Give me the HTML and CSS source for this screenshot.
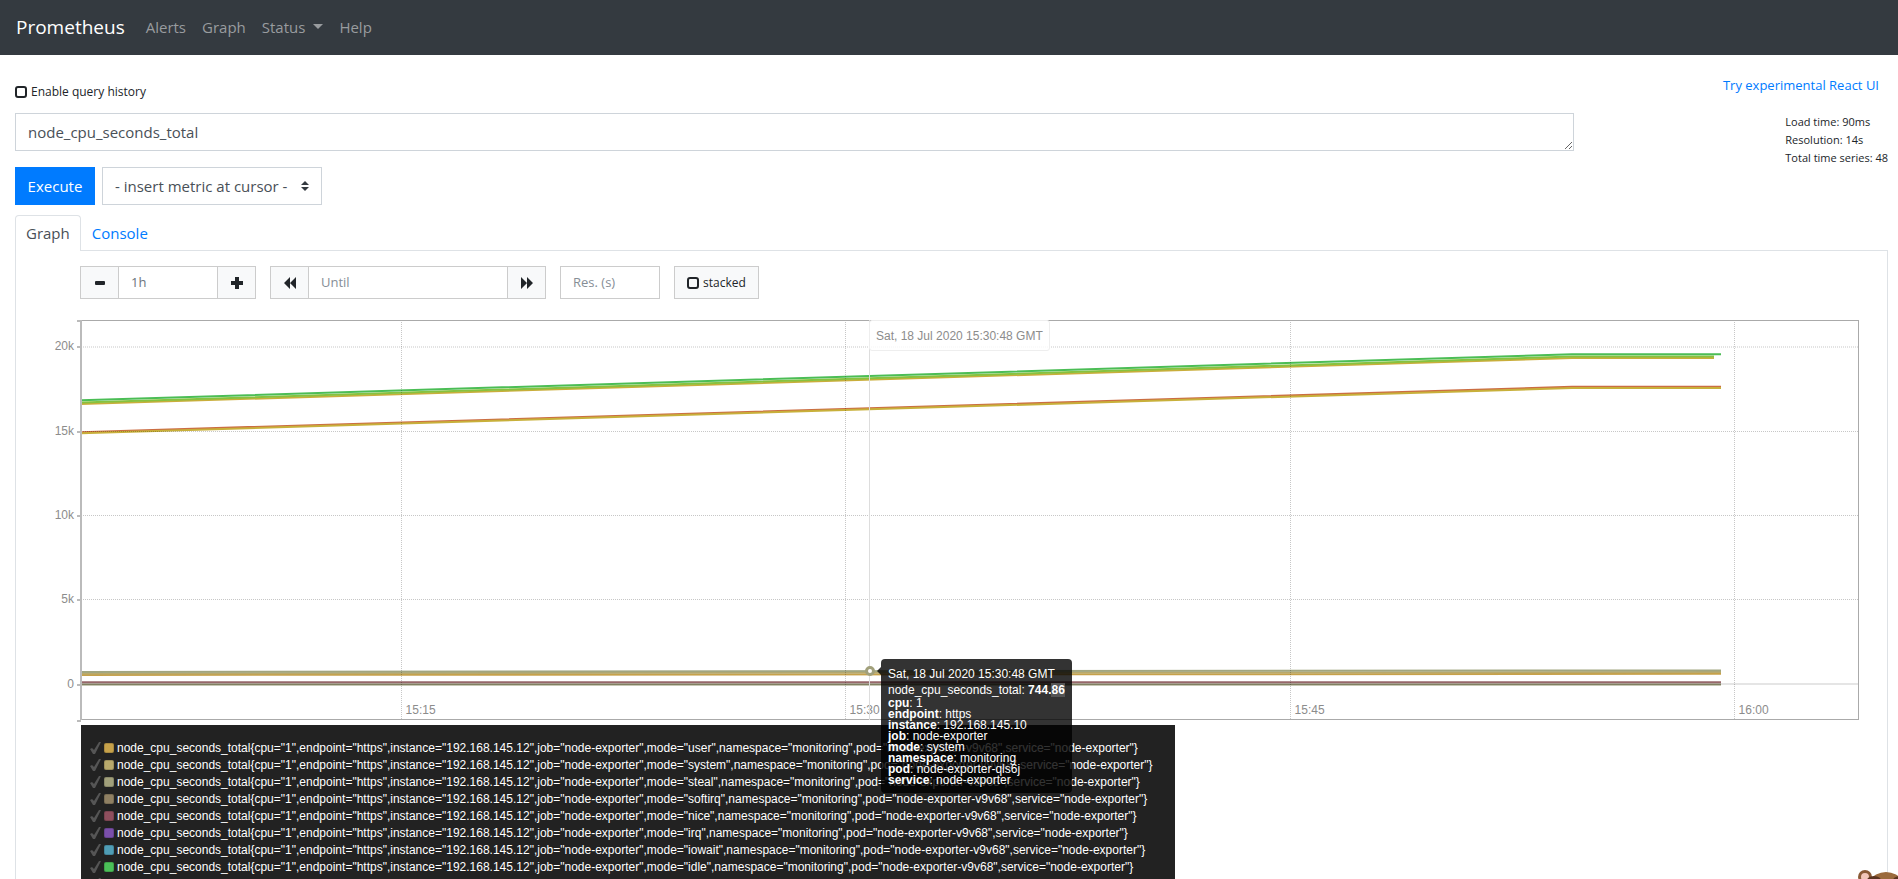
FILE: index.html
```
<!DOCTYPE html>
<html lang="en">
<head>
    <meta charset="UTF-8">
    <meta name="viewport" content="width=device-width, initial-scale=1.0">
    <title>Prometheus Time Series Collection and Processing Server</title>
    <link rel="stylesheet" href="styles.css">
</head>
<body>
    <nav class="navbar">
        <a class="brand" href="#">Prometheus</a>
        <a class="nav-link" href="#">Alerts</a>
        <a class="nav-link" href="#">Graph</a>
        <a class="nav-link dropdown" href="#">Status</a>
        <a class="nav-link" href="#">Help</a>
    </nav>

    <main class="container">
        <div class="top-row">
            <label class="check"><input type="checkbox" id="history"> Enable query history</label>
            <a class="new-ui" href="#">Try experimental React UI</a>
        </div>

        <div class="query-row">
            <textarea class="expression" rows="1" aria-label="Expression" spellcheck="false">node_cpu_seconds_total</textarea>
            <div class="stats">
                Load time: 90ms<br>
                Resolution: 14s<br>
                Total time series: 48
            </div>
        </div>

        <div class="execute-row">
            <button type="button" class="execute-btn">Execute</button>
            <div class="select-wrap">
                <select class="metric-select" aria-label="Insert metric">
                    <option>- insert metric at cursor -</option>
                </select>
                <svg class="select-icon" viewBox="0 0 8 10"><path d="M4 0 8 4H0zM0 6h8L4 10z"/></svg>
            </div>
        </div>

        <div class="tabs">
            <a class="tab active" href="#graph">Graph</a>
            <a class="tab" href="#console">Console</a>
        </div>

        <section class="tab-pane" id="graph">
            <form class="controls">
                <div class="group">
                    <button type="button" aria-label="Shrink range"><svg viewBox="0 0 12 12"><rect x="1" y="4" width="10" height="4" rx="1"/></svg></button>
                    <input class="range" type="text" value="1h" aria-label="Range">
                    <button type="button" aria-label="Grow range"><svg viewBox="0 0 12 12"><path d="M4 0h4v4h4v4H8v4H4V8H0V4h4z"/></svg></button>
                </div>
                <div class="group">
                    <button type="button" aria-label="Rewind"><svg viewBox="0 0 12 12"><path d="M0 6 6 0v12zM6 6l6-6v12z"/></svg></button>
                    <input class="until" type="text" placeholder="Until" aria-label="Until">
                    <button type="button" aria-label="Forward"><svg viewBox="0 0 12 12"><path d="M0 0l6 6-6 6zM6 0l6 6-6 6z"/></svg></button>
                </div>
                <div class="group">
                    <input class="resolution" type="text" placeholder="Res. (s)" aria-label="Resolution in seconds">
                </div>
                <label class="check stacked"><input type="checkbox" id="stacked"> stacked</label>
            </form>

            <div class="graph-area">
                <div class="chart">
                    <svg class="plot" viewBox="0 0 1778 400" preserveAspectRatio="none">
                        <g class="series">
                            <path stroke="#c9ae3b" d="M0 84 1491 38H1633"/>
                            <path stroke="#86c23f" d="M0 82.6 1491 36.6H1633"/>
                            <path stroke="#4bbd55" d="M0 80.3 1491 34.3H1640"/>
                            <path stroke="#cb6d43" d="M0 112.2 1491 66.8H1640"/>
                            <path stroke="#c8b03a" d="M0 113.3 1491 68H1640"/>
                            <path stroke="#c6a14a" d="M0 355 1640 353.8"/>
                            <path stroke="#b8a96c" d="M0 353.4 1640 352"/>
                            <path stroke="#a1a680" d="M0 352 1640 350.4"/>
                            <path stroke="#8f8f6c" d="M0 364.6H1640"/>
                            <path stroke="#96676a" d="M0 362.3H1640"/>
                        </g>
                        <g class="grid">
                            <path d="M0 27H1778M0 111.5H1778M0 195.5H1778M0 279.5H1778"/>
                            <path d="M320.5 0V400M764.5 0V400M1209.5 0V400M1653.5 0V400"/>
                        </g>
                        <path class="zero" d="M0 364H1778"/>
                        <rect class="frame" x="0.5" y="0.5" width="1777" height="399"/>
                        <path class="axis" d="M0 0V400"/>
                    </svg>
                    <div class="y-axis">
                        <span style="top: 0%"></span>
                        <span style="top: 6.5%">20k</span>
                        <span style="top: 27.75%">15k</span>
                        <span style="top: 48.75%">10k</span>
                        <span style="top: 69.75%">5k</span>
                        <span style="top: 91%">0</span>
                        <span style="top: 100%"></span>
                    </div>
                    <div class="x-axis">
                        <span style="left: 18.03%">15:15</span>
                        <span style="left: 43%">15:30</span>
                        <span style="left: 68.03%">15:45</span>
                        <span style="left: 93%">16:00</span>
                    </div>
                    <div class="hover" style="left: 44.32%">
                        <div class="x-label">Sat, 18 Jul 2020 15:30:48 GMT</div>
                        <div class="dot"></div>
                        <div class="tooltip">
                            <div class="date">Sat, 18 Jul 2020 15:30:48 GMT</div>
                            <div class="value">node_cpu_seconds_total: <strong>744.<mark>86</mark></strong></div>
                            <div class="labels">
                                <div><strong>cpu</strong>: 1</div>
                                <div><strong>endpoint</strong>: https</div>
                                <div><strong>instance</strong>: 192.168.145.10</div>
                                <div><strong>job</strong>: node-exporter</div>
                                <div><strong>mode</strong>: system</div>
                                <div><strong>namespace</strong>: monitoring</div>
                                <div><strong>pod</strong>: node-exporter-qls6j</div>
                                <div><strong>service</strong>: node-exporter</div>
                            </div>
                        </div>
                    </div>
                </div>

                <ul class="legend" id="legend"></ul>
            </div>
        </section>
    </main>

    <svg class="bear" viewBox="0 0 80 80" aria-hidden="true">
        <ellipse cx="28" cy="36" rx="26" ry="34" fill="#9b6a3c"/>
        <circle cx="7" cy="7" r="7" fill="#8a5a35"/>
        <circle cx="7" cy="7" r="4" fill="#f3c6b8"/>
        <ellipse cx="16" cy="12" rx="8" ry="6" fill="#5a3420"/>
        <ellipse cx="42" cy="12" rx="8" ry="6" fill="#5a3420"/>
    </svg>

    <script>
        const series = [
            ['user', '#c6a14a'],
            ['system', '#b8a96c'],
            ['steal', '#a1a07b'],
            ['softirq', '#8f8063'],
            ['nice', '#8f4f5e'],
            ['irq', '#7a4faa'],
            ['iowait', '#4f9db5'],
            ['idle', '#4bbf58'],
            ['user', '#9fb040']
        ];

        // Fill the legend, one row per series
        const legend = document.getElementById('legend');
        series.forEach(([mode, color]) => {
            const li = document.createElement('li');
            li.innerHTML = '<svg class="tick" viewBox="0 0 11 12"><path d="M0 7 2 6 4 8 9 0h2L5 12H3z"/></svg><span class="swatch"></span><span class="name"></span>';
            li.querySelector('.swatch').style.background = color;
            li.querySelector('.name').textContent =
                `node_cpu_seconds_total{cpu="1",endpoint="https",instance="192.168.145.12",job="node-exporter",mode="${mode}",namespace="monitoring",pod="node-exporter-v9v68",service="node-exporter"}`;
            legend.appendChild(li);
        });
    </script>
</body>
</html>
```

FILE: styles.css
```
* {
    box-sizing: border-box;
}

body {
    margin: 0;
    height: 100vh;
    overflow: hidden;
    font-family: "Open Sans", "Noto Sans", sans-serif;
    font-size: 15px;
    line-height: 24px;
    color: #212529;
    background: #fff;
}

a {
    color: #007bff;
    text-decoration: none;
}

button,
input,
select,
textarea {
    font-family: inherit;
    border-radius: 0;
}

.navbar {
    display: flex;
    align-items: center;
    gap: 16px;
    height: 55px;
    padding: 0 16px 2px;
    background: #343a40;
}

.brand {
    margin-right: 5px;
    font-size: 19px;
    color: #fff;
}

.nav-link {
    color: #999c9f;
}

.dropdown::after {
    content: '';
    display: inline-block;
    margin-left: 8px;
    vertical-align: 4px;
    border-top: 5px solid;
    border-right: 5px solid transparent;
    border-left: 5px solid transparent;
}

.container {
    padding: 18px 10px 0 15px;
}

.top-row {
    display: flex;
    justify-content: space-between;
    height: 40px;
    font-size: 13px;
}

.check {
    display: flex;
    align-items: center;
    gap: 4px;
    font-size: 12px;
}

.check input {
    appearance: none;
    width: 12px;
    height: 12px;
    margin: 0;
    border: 2px solid #212529;
    border-radius: 3px;
}

.top-row .check {
    align-self: flex-start;
    margin-top: 7px;
}

.new-ui {
    padding-right: 9px;
}

.query-row {
    display: flex;
    justify-content: space-between;
}

.expression {
    width: calc(100% - 314px);
    height: 38px;
    padding: 6px 12px;
    border: 1px solid #ced4da;
    font-size: 15px;
    line-height: 24px;
    color: #495057;
    resize: vertical;
}

.stats {
    height: 54px;
    font-size: 11px;
    line-height: 18px;
    white-space: nowrap;
}

.execute-row {
    display: flex;
    gap: 7px;
}

.execute-btn {
    width: 80px;
    height: 38px;
    padding: 0;
    border: 0;
    background: #007bff;
    color: #fff;
    font-size: 15px;
}

.select-wrap {
    position: relative;
}

.metric-select {
    appearance: none;
    width: 220px;
    height: 38px;
    padding: 0 12px;
    border: 1px solid #ced4da;
    background: #fff;
    color: #495057;
    font-size: 15px;
}

.select-icon {
    position: absolute;
    top: 14px;
    right: 13px;
    width: 8px;
    height: 10px;
    fill: #343a40;
}

.tabs {
    display: flex;
    margin-top: 10px;
    border-bottom: 1px solid #dee2e6;
}

.tab {
    height: 35px;
    padding: 5px 10px;
    border: 1px solid transparent;
    border-bottom: 0;
}

.tab.active {
    height: 36px;
    margin-bottom: -1px;
    border-color: #dee2e6;
    border-radius: 4px 4px 0 0;
    background: #fff;
    color: #495057;
}

.tab-pane {
    padding: 15px 28px 0 64px;
    border: 1px solid #dee2e6;
    border-top: 0;
}

.controls {
    display: flex;
    gap: 14px;
    height: 33px;
}

.group {
    display: flex;
}

.group button {
    width: 38px;
    padding: 0;
    border: 1px solid #ccc;
    background: #f8f9fa;
}

.group button:first-child {
    border-right: 0;
}

.group button:last-child {
    border-left: 0;
}

.group svg {
    display: block;
    width: 12px;
    height: 12px;
    margin: 0 auto;
    fill: #212529;
}

.group input {
    width: 100px;
    padding: 0 12px 2px;
    border: 1px solid #ccc;
    color: #6c757d;
    font-size: 13px;
}

.group input::placeholder {
    color: #868e96;
}

.group .until {
    width: 200px;
}

.stacked {
    padding: 0 12px;
    border: 1px solid #ccc;
    background: #f8f9fa;
}

.graph-area {
    margin: 21px 0 0 1px;
    font-family: "Liberation Sans", Arial, sans-serif;
    font-size: 12px;
}

.chart {
    position: relative;
    height: 400px;
}

.plot {
    display: block;
    width: 100%;
    height: 100%;
    overflow: visible;
    fill: none;
}

.series path {
    stroke-width: 2;
}

.grid path {
    stroke: #000;
    stroke-opacity: 0.22;
    stroke-dasharray: 1 1;
}

.zero {
    stroke: #000;
    stroke-opacity: 0.1;
    stroke-width: 2;
}

.frame {
    stroke: #aaa;
}

.axis {
    stroke: #bbb;
    stroke-width: 2;
}

.y-axis span {
    position: absolute;
    right: 100%;
    height: 1px;
    padding-right: 7px;
    line-height: 1px;
    color: #8c8c8c;
}

/* tick mark beside each value */
.y-axis span::after {
    content: '';
    position: absolute;
    top: 0;
    right: 0;
    width: 4px;
    height: 2px;
    background: #bbb;
}

.x-axis span {
    position: absolute;
    bottom: 2px;
    padding-left: 4px;
    line-height: 16px;
    color: #8c8c8c;
}

.hover {
    position: absolute;
    top: 0;
    bottom: 0;
    border-left: 1px solid #ddd;
}

.x-label {
    position: absolute;
    top: 0;
    left: -1px;
    height: 31px;
    padding: 0 6px;
    border: 1px solid #eee;
    border-radius: 3px;
    background: rgba(255, 255, 255, 0.8);
    line-height: 30px;
    color: #8c8c8c;
    white-space: nowrap;
}

.dot {
    position: absolute;
    top: 346px;
    left: -5px;
    width: 10px;
    height: 10px;
    border: 3px solid #a1a07b;
    border-radius: 50%;
    background: #fff;
}

.tooltip {
    position: absolute;
    top: 339px;
    left: 11px;
    z-index: 2;
    width: 191px;
    height: 134px;
    padding: 7px 0 0 7px;
    border-radius: 4px;
    background: rgba(0, 0, 0, 0.8);
    color: #fff;
    white-space: nowrap;
}

.tooltip::before {
    content: '';
    position: absolute;
    top: 8px;
    left: -4px;
    border: 4px solid transparent;
    border-left: 0;
    border-right-color: rgba(0, 0, 0, 0.8);
}

.tooltip strong {
    font-weight: bold;
}

.tooltip mark {
    background: #555;
    color: #fff;
}

.date,
.value {
    line-height: 16px;
}

.labels {
    line-height: 11px;
}

.legend {
    position: relative;
    width: 1094px;
    margin: 5px 0 0;
    padding: 14px 9px;
    background: #222;
    color: #fff;
    list-style: none;
}

.legend li {
    display: flex;
    align-items: center;
    height: 17px;
    white-space: nowrap;
}

.tick {
    width: 11px;
    height: 12px;
    margin-right: 3px;
    fill: #555;
}

.swatch {
    width: 10px;
    height: 10px;
    margin-right: 3px;
    border: 1px solid rgba(0, 0, 0, 0.15);
    border-radius: 2px;
}

.bear {
    position: fixed;
    right: -40px;
    bottom: -71px;
    width: 80px;
    height: 80px;
}
```
